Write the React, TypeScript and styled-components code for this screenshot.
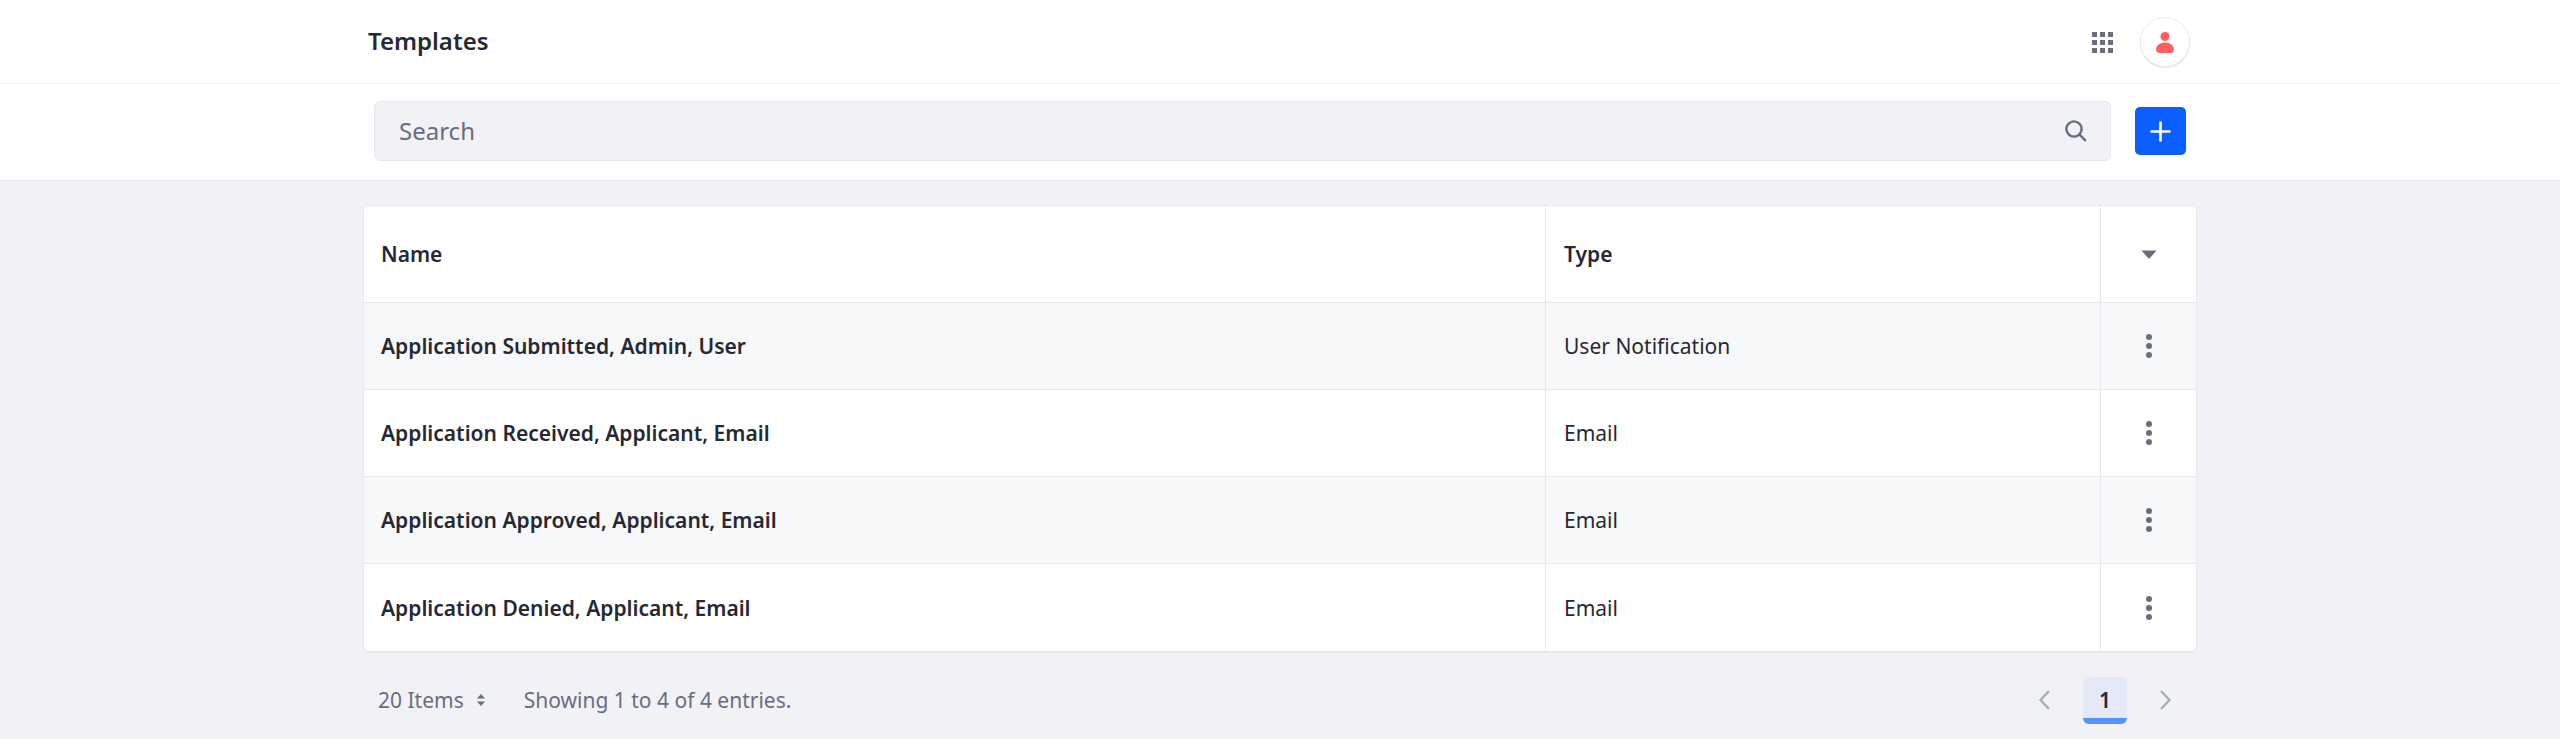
import React from "react";
import styled, { createGlobalStyle } from "styled-components";

const Global = createGlobalStyle`
  html, body { margin: 0; padding: 0; background: #f1f2f6; }
  body { font-family: "Noto Sans", "Open Sans", sans-serif; color: #272833; }
  * { box-sizing: border-box; }
`;

const Page = styled.div`
  width: 2560px;
  height: 739px;
  overflow: hidden;
  background: #f1f2f6;
`;

const TopBar = styled.header`
  height: 84px;
  background: #fff;
  border-bottom: 1px solid #f1f2f5;
`;

const TopInner = styled.div`
  height: 83px;
  padding: 1px 370px 0 368px;
  display: flex;
  align-items: center;
  justify-content: space-between;
`;

const Title = styled.h1`
  margin: 0;
  font-size: 24px;
  line-height: 1;
  font-weight: 600;
  color: #272833;
  position: relative;
  top: -1px;
`;

const TopActions = styled.div`
  display: flex;
  align-items: center;
  gap: 27px;
`;

const GridIcon = styled.svg`
  width: 21px;
  height: 21px;
  display: block;
  fill: #6b6c7e;
`;

const Avatar = styled.div`
  width: 50px;
  height: 50px;
  border-radius: 50%;
  background: #fff;
  border: 1px solid #ebecf1;
  box-shadow: 0 1px 1px #e0e1e9;
  display: flex;
  align-items: center;
  justify-content: center;
`;

const SearchBar = styled.div`
  height: 97px;
  background: #fff;
  border-bottom: 1px solid #e7e7ed;
  padding: 17px 374px 0;
  display: flex;
  align-items: flex-start;
  gap: 24px;
`;

const SearchField = styled.div`
  width: 1737px;
  height: 60px;
  background: #f1f2f6;
  border: 1px solid #e7e7ed;
  border-radius: 6px;
  display: flex;
  align-items: center;
  justify-content: space-between;
  padding: 0 23px 0 24px;
`;

const Placeholder = styled.span`
  font-size: 24px;
  color: #6b6c7e;
  position: relative;
  top: -1px;
`;

const SearchGlyph = styled.svg`
  width: 22px;
  height: 22px;
  display: block;
  fill: none;
  stroke: #6b6c7e;
  stroke-width: 2.4;
`;

const AddButton = styled.button`
  width: 51px;
  height: 48px;
  margin-top: 6px;
  border: none;
  border-radius: 5px;
  background: #0b5fff;
  padding: 0;
  display: flex;
  align-items: center;
  justify-content: center;
`;

const Content = styled.main`
  padding: 24px 363px 0;
`;

const Card = styled.div`
  width: 1834px;
  background: #fff;
  border-radius: 6px;
  border: 1px solid #e7e7ed;
  box-shadow: 0 1px 1px #e7e7ed;
  overflow: hidden;
`;

const Row = styled.div<{ $head?: boolean; $shade?: boolean; $last?: boolean }>`
  display: grid;
  grid-template-columns: 1181px 555px 1fr;
  height: ${(p) => (p.$head ? "97px" : "87px")};
  background: ${(p) => (p.$shade ? "#f7f8f9" : "#fff")};
  border-bottom: ${(p) => (p.$last ? "none" : "1px solid #e7e7ed")};
`;

const Cell = styled.div<{ $bold?: boolean }>`
  display: flex;
  align-items: center;
  padding: 0 17px;
  font-size: 21px;
  font-weight: ${(p) => (p.$bold ? 600 : 400)};
  color: #272833;
  & + & {
    border-left: 1px solid #e7e7ed;
    padding-left: 18px;
  }
`;

const ActionCell = styled.div`
  display: flex;
  align-items: center;
  justify-content: center;
  border-left: 1px solid #e7e7ed;
`;

const Footer = styled.div`
  display: flex;
  align-items: center;
  justify-content: space-between;
  padding: 0 26px 0 15px;
  height: 96px;
`;

const FooterLeft = styled.div`
  display: flex;
  align-items: center;
  font-size: 21px;
  color: #6b6c7e;
`;

const ItemsSelect = styled.span`
  display: inline-flex;
  align-items: center;
  gap: 13px;
  margin-right: 39px;
`;

const Pager = styled.nav`
  display: flex;
  align-items: center;
  gap: 33px;
`;

const PageArrow = styled.svg`
  width: 11px;
  height: 20px;
  display: block;
  fill: none;
  stroke: #a7a9bc;
  stroke-width: 2.2;
`;

const PageNumber = styled.span`
  width: 44px;
  height: 47px;
  padding-top: 6px;
  border-radius: 6px;
  background: #e3e9f7;
  border-bottom: 6px solid #5791ff;
  color: #272833;
  font-size: 21px;
  font-weight: 600;
  display: flex;
  align-items: center;
  justify-content: center;
`;

const GridDots = () => (
  <GridIcon viewBox="0 0 21 21">
    {[0, 8, 16].flatMap((y) =>
      [0, 8, 16].map((x) => <rect key={`${x}-${y}`} x={x} y={y} width="5" height="5" />)
    )}
  </GridIcon>
);

const UserIcon = () => (
  <svg width="18" height="21" viewBox="0 0 18 21" fill="#ff5f5f">
    <circle cx="9" cy="4.5" r="4.5" />
    <path d="M9 10.5c-5 0-9 3-9 6.8C0 19.5 1.5 21 3.5 21h11c2 0 3.500-1.500 3.500-3.700 0-3.800-4-6.800-9-6.800z" />
  </svg>
);

const SearchIcon = () => (
  <SearchGlyph viewBox="0 0 22 22">
    <circle cx="9" cy="9" r="7.6" />
    <path d="M14.600 14.600l6.200 6.200" />
  </SearchGlyph>
);

const PlusIcon = () => (
  <svg width="21" height="21" viewBox="0 0 21 21" stroke="#fff" strokeWidth="2.6" strokeLinecap="round">
    <path d="M10.500 1.500v18M1.500 10.500h18" />
  </svg>
);

const Caret = () => (
  <svg width="16" height="9" viewBox="0 0 16 9" fill="#6b6c7e">
    <path d="M0.500 0.500h15l-6.600 7.600a1.200 1.200 0 0 1-1.800 0z" />
  </svg>
);

const Kebab = () => (
  <svg width="6" height="24" viewBox="0 0 6 24" fill="#6b6c7e">
    <circle cx="3" cy="3" r="3" />
    <circle cx="3" cy="12" r="3" />
    <circle cx="3" cy="21" r="3" />
  </svg>
);

const UpDown = () => (
  <svg width="8" height="12" viewBox="0 0 8 12" fill="#6b6c7e">
    <path d="M4 0l4 4.600H0zM4 12L0 7.400h8z" />
  </svg>
);

const rows = [
  { name: "Application Submitted, Admin, User", type: "User Notification" },
  { name: "Application Received, Applicant, Email", type: "Email" },
  { name: "Application Approved, Applicant, Email", type: "Email" },
  { name: "Application Denied, Applicant, Email", type: "Email" },
];

export default function App() {
  return (
    <Page>
      <Global />
      <TopBar>
        <TopInner>
          <Title>Templates</Title>
          <TopActions>
            <GridDots />
            <Avatar>
              <UserIcon />
            </Avatar>
          </TopActions>
        </TopInner>
      </TopBar>
      <SearchBar>
        <SearchField>
          <Placeholder>Search</Placeholder>
          <SearchIcon />
        </SearchField>
        <AddButton aria-label="Add">
          <PlusIcon />
        </AddButton>
      </SearchBar>
      <Content>
        <Card>
          <Row $head>
            <Cell $bold>Name</Cell>
            <Cell $bold>Type</Cell>
            <ActionCell>
              <Caret />
            </ActionCell>
          </Row>
          {rows.map((r, i) => (
            <Row key={r.name} $shade={i % 2 === 0} $last={i === rows.length - 1}>
              <Cell $bold>{r.name}</Cell>
              <Cell>{r.type}</Cell>
              <ActionCell>
                <Kebab />
              </ActionCell>
            </Row>
          ))}
        </Card>
        <Footer>
          <FooterLeft>
            <ItemsSelect>
              20 Items
              <UpDown />
            </ItemsSelect>
            Showing 1 to 4 of 4 entries.
          </FooterLeft>
          <Pager>
            <PageArrow viewBox="0 0 11 20">
              <path d="M10 1L1.500 10l8.500 9" />
            </PageArrow>
            <PageNumber>1</PageNumber>
            <PageArrow viewBox="0 0 11 20">
              <path d="M1 1l8.500 9L1 19" />
            </PageArrow>
          </Pager>
        </Footer>
      </Content>
    </Page>
  );
}
